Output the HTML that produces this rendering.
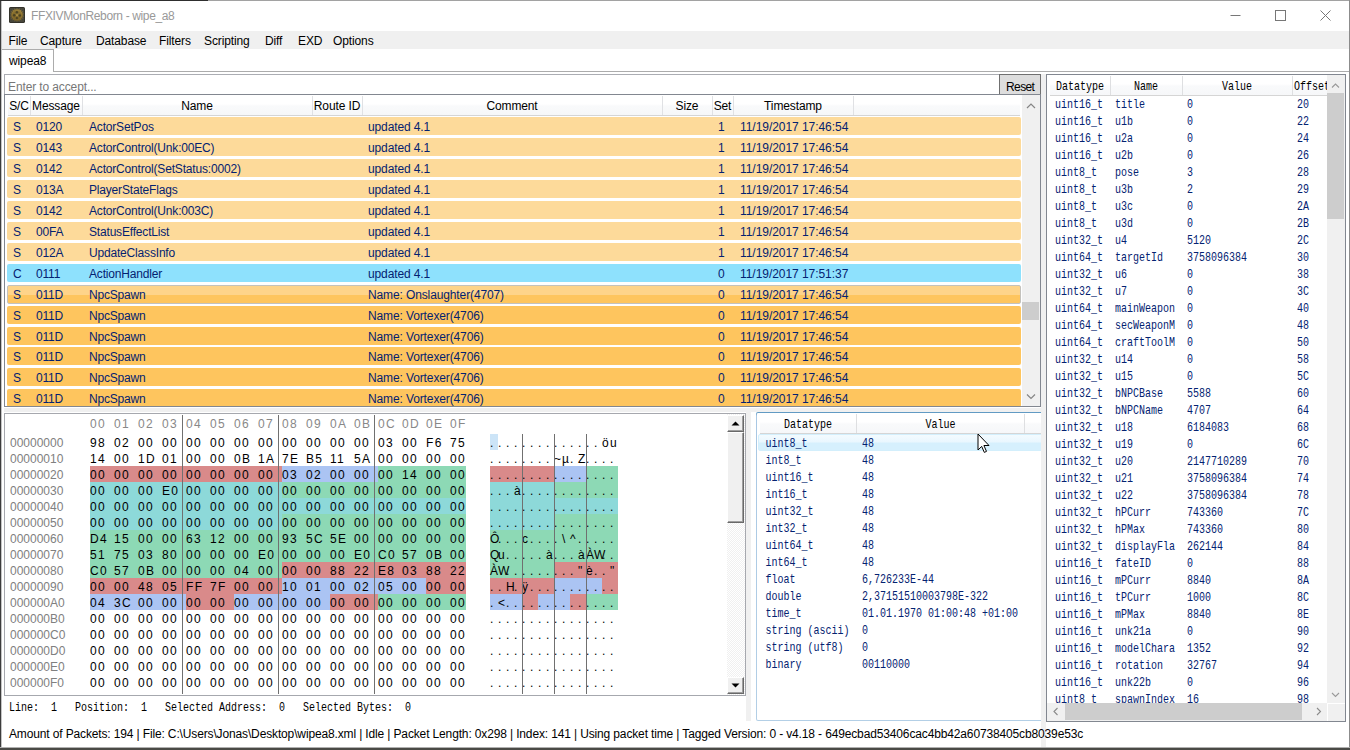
<!DOCTYPE html>
<html lang="en"><head><meta charset="utf-8"><title>FFXIVMonReborn - wipe_a8</title>
<style>
*{box-sizing:border-box;margin:0;padding:0}
html,body{width:1350px;height:750px;overflow:hidden;background:#fff}
body{position:relative;font-family:"Liberation Sans",sans-serif;font-size:12px;color:#000;letter-spacing:-0.12px}
.abs{position:absolute}
.t{position:absolute;white-space:nowrap;line-height:16px;height:16px}
.mono{font-family:"Liberation Mono",monospace;letter-spacing:0}
/* window frame */
#frameL{left:0;top:0;width:2px;height:750px;background:linear-gradient(90deg,#3c3c3c 0,#3c3c3c 1px,#c4c4c4 1px,#c4c4c4 100%)}
#frameT{left:0;top:0;width:1350px;height:1px;background:linear-gradient(90deg,#2e2e2e 0,#2e2e2e 208px,#a2a2a2 208px,#a2a2a2 100%)}
#frameR{left:1349px;top:0;width:1px;height:750px;background:#8c8c8c}
#frameB{left:0;top:747px;width:1350px;height:3px;background:linear-gradient(#b0b0b0 0,#b0b0b0 1px,#4a4a46 1px,#4a4a46 100%)}
#menubar{left:1px;top:31px;width:1348px;height:18px;background:#f0f0f0}
#tab{left:1px;top:49px;width:53px;height:23px;border:1px solid #acacac;border-bottom:none;background:#fff}
#tabline{left:53px;top:71px;width:1296px;height:1px;background:#acacac}
/* main list */
#filter{left:4px;top:74px;width:996px;height:21px;border:1px solid #abadb3;border-bottom:none;background:#fff}
#reset{left:999px;top:74px;width:42px;height:21px;border:1px solid #707070;background:#ddd}
#list{left:4px;top:94px;width:1037px;height:313px;border:1px solid #828790;background:#fff;overflow:hidden}
.hdr{position:absolute;top:0;height:21px;background:linear-gradient(#fff 0,#fff 45%,#f9fafb 55%,#f6f7f9 100%);border-bottom:1px solid #d5d5d5}
.hc{position:absolute;top:1px;height:19px;border-right:1px solid #e0e1e4;text-align:center;line-height:20px;white-space:nowrap}
.row{position:absolute;left:2px;width:1014px;height:18px;border-radius:2px;color:#042271;white-space:nowrap;letter-spacing:-0.18px}
.row span{position:absolute;top:1px;line-height:18px}
.lo{background:#fdda9a}
.or{background:#fec55e}
.bl{background:#8ee1fd}
.vsb{position:absolute;background:#f0f0f0}
.thumb{position:absolute;background:#cdcdcd}
/* hex */
#hex{left:4px;top:413px;width:742px;height:283px;border:1px solid #a6a8ae;background:#fff;overflow:hidden}
.hx{position:absolute;height:16px;line-height:16px;white-space:nowrap;font-size:12px;letter-spacing:1.33px}
.hb{position:absolute;height:16px}
.sep{position:absolute;width:1px;background:#707070}

.hxb i{display:inline-block;width:24px;font-style:normal}
.asc{letter-spacing:0}
.asc i{display:inline-block;width:8px;font-style:normal;text-align:left;overflow:visible}
.cbtn{width:17px;background:#f0f0f0;border:1px solid;border-color:#fff #696969 #696969 #fff;box-shadow:inset -1px -1px 0 #a0a0a0, inset 1px 1px 0 #f0f0f0}
.hov{height:19px;background:linear-gradient(#fed48a 0,#fed48a 9px,#fec55e 9px,#fec55e 100%);border:1px solid #c4c2bd}
.hov span{top:0 !important;margin-left:-1px}
.dhov{height:16px;margin-top:-1px;margin-left:-1px;padding-left:1px;background:linear-gradient(#f3fbff 0,#eaf7fe 45%,#d6f0fd 55%,#d6f0fd 100%);border:1px solid #d3effc;border-radius:2px}
.dhov .mc{margin-top:0;margin-left:0}
/* datatype list */
.mrow{position:absolute;height:17px;white-space:nowrap;color:#042271}
.mc{position:absolute;top:0;height:17px;line-height:17px;font-family:"Liberation Mono",monospace;font-size:10px;letter-spacing:0;transform:scaleY(1.32);transform-origin:0 50%;white-space:nowrap}
.mh{position:absolute;top:1px;height:19px;line-height:22px;font-family:"Liberation Mono",monospace;font-size:10px;letter-spacing:0;text-align:center;border-right:1px solid #dedfe1;color:#000;white-space:nowrap}
.mh b{display:inline-block;font-weight:normal;transform:scaleY(1.32)}
</style></head>
<body>
<div class="abs" id="menubar"></div>
<svg class="abs" style="left:9px;top:7px" width="16" height="16" viewBox="0 0 16 16">
<defs><radialGradient id="gg" cx="0.55" cy="0.3" r="0.75"><stop offset="0" stop-color="#ab9144"/><stop offset="0.55" stop-color="#8c722e"/><stop offset="1" stop-color="#705b25"/></radialGradient></defs>
<rect x="0" y="0" width="16" height="16" rx="1.6" fill="#2c2b24"/>
<rect x="0.7" y="0.7" width="14.6" height="14.6" rx="1" fill="#47463c"/>
<polygon points="8.00,0.70 8.90,2.88 10.50,1.14 10.60,3.50 12.69,2.41 11.98,4.66 14.32,4.35 12.89,6.22 15.19,6.73 13.20,8.00 15.19,9.27 12.89,9.78 14.32,11.65 11.98,11.34 12.69,13.59 10.60,12.50 10.50,14.86 8.90,13.12 8.00,15.30 7.10,13.12 5.50,14.86 5.40,12.50 3.31,13.59 4.02,11.34 1.68,11.65 3.11,9.78 0.81,9.27 2.80,8.00 0.81,6.73 3.11,6.22 1.68,4.35 4.02,4.66 3.31,2.41 5.40,3.50 5.50,1.14 7.10,2.88" fill="url(#gg)"/>
<circle cx="8" cy="8" r="4.4" fill="#6f5a24" opacity="0.5"/>
<circle cx="7.9" cy="5.3" r="1.25" fill="#3d3820" opacity="0.8"/><circle cx="5.2" cy="8.3" r="1.25" fill="#3d3820" opacity="0.8"/><circle cx="10.8" cy="8.5" r="1.25" fill="#3d3820" opacity="0.8"/><circle cx="7.9" cy="11.1" r="1.15" fill="#3d3820" opacity="0.8"/>
<circle cx="8" cy="8.1" r="0.9" fill="#b59b4e"/>
</svg>
<div class="t" style="left:31px;top:8px;color:#999;letter-spacing:-0.36px">FFXIVMonReborn - wipe_a8</div>
<svg class="abs" style="left:1220px;top:1px" width="128" height="30" viewBox="0 0 128 30">
<path d="M10.5 14.5h10" stroke="#777" stroke-width="1" fill="none"/>
<rect x="55.5" y="9.5" width="10" height="10" stroke="#777" stroke-width="1" fill="none"/>
<path d="M100.5 9.5l10 10M110.5 9.5l-10 10" stroke="#777" stroke-width="1" fill="none"/>
</svg>
<div class="t" style="left:8.5px;top:33px">File</div><div class="t" style="left:40px;top:33px">Capture</div><div class="t" style="left:96px;top:33px">Database</div><div class="t" style="left:159px;top:33px">Filters</div><div class="t" style="left:204px;top:33px">Scripting</div><div class="t" style="left:265px;top:33px">Diff</div><div class="t" style="left:298px;top:33px">EXD</div><div class="t" style="left:333px;top:33px">Options</div>
<div class="abs" id="tab"></div><div class="abs" id="tabline"></div>
<div class="t" style="left:9px;top:53px">wipea8</div>
<div class="abs" id="filter"></div><div class="t" style="left:8px;top:79px;color:#777">Enter to accept...</div>
<div class="abs" id="reset"></div><div class="t" style="left:1006px;top:79px;letter-spacing:-0.6px">Reset</div>
<div class="abs" id="list">
<div class="hdr" style="left:3px;width:1012px"></div>
<div class="hc" style="left:3px;width:23px">S/C</div><div class="hc" style="left:25px;width:53px">Message</div><div class="hc" style="left:77px;width:231px">Name</div><div class="hc" style="left:307px;width:51px">Route ID</div><div class="hc" style="left:357px;width:301px">Comment</div><div class="hc" style="left:657px;width:51px">Size</div><div class="hc" style="left:707px;width:22px">Set</div><div class="hc" style="left:728px;width:121px">Timestamp</div>
<div class="row lo" style="top:22px"><span style="left:6px">S</span><span style="left:29px">0120</span><span style="left:82px">ActorSetPos</span><span style="left:361px;letter-spacing:-0.12px">updated 4.1</span><span style="left:711px">1</span><span style="left:733px;letter-spacing:-0.05px">11/19/2017 17:46:54</span></div>
<div class="row lo" style="top:43px"><span style="left:6px">S</span><span style="left:29px">0143</span><span style="left:82px">ActorControl(Unk:00EC)</span><span style="left:361px;letter-spacing:-0.12px">updated 4.1</span><span style="left:711px">1</span><span style="left:733px;letter-spacing:-0.05px">11/19/2017 17:46:54</span></div>
<div class="row lo" style="top:64px"><span style="left:6px">S</span><span style="left:29px">0142</span><span style="left:82px">ActorControl(SetStatus:0002)</span><span style="left:361px;letter-spacing:-0.12px">updated 4.1</span><span style="left:711px">1</span><span style="left:733px;letter-spacing:-0.05px">11/19/2017 17:46:54</span></div>
<div class="row lo" style="top:85px"><span style="left:6px">S</span><span style="left:29px">013A</span><span style="left:82px">PlayerStateFlags</span><span style="left:361px;letter-spacing:-0.12px">updated 4.1</span><span style="left:711px">1</span><span style="left:733px;letter-spacing:-0.05px">11/19/2017 17:46:54</span></div>
<div class="row lo" style="top:106px"><span style="left:6px">S</span><span style="left:29px">0142</span><span style="left:82px">ActorControl(Unk:003C)</span><span style="left:361px;letter-spacing:-0.12px">updated 4.1</span><span style="left:711px">1</span><span style="left:733px;letter-spacing:-0.05px">11/19/2017 17:46:54</span></div>
<div class="row lo" style="top:127px"><span style="left:6px">S</span><span style="left:29px">00FA</span><span style="left:82px">StatusEffectList</span><span style="left:361px;letter-spacing:-0.12px">updated 4.1</span><span style="left:711px">1</span><span style="left:733px;letter-spacing:-0.05px">11/19/2017 17:46:54</span></div>
<div class="row lo" style="top:148px"><span style="left:6px">S</span><span style="left:29px">012A</span><span style="left:82px">UpdateClassInfo</span><span style="left:361px;letter-spacing:-0.12px">updated 4.1</span><span style="left:711px">1</span><span style="left:733px;letter-spacing:-0.05px">11/19/2017 17:46:54</span></div>
<div class="row bl" style="top:169px"><span style="left:6px">C</span><span style="left:29px">0111</span><span style="left:82px">ActionHandler</span><span style="left:361px;letter-spacing:-0.12px">updated 4.1</span><span style="left:711px">0</span><span style="left:733px;letter-spacing:-0.05px">11/19/2017 17:51:37</span></div>
<div class="row or hov" style="top:190px"><span style="left:6px">S</span><span style="left:29px">011D</span><span style="left:82px">NpcSpawn</span><span style="left:361px;letter-spacing:-0.12px">Name: Onslaughter(4707)</span><span style="left:711px">0</span><span style="left:733px;letter-spacing:-0.05px">11/19/2017 17:46:54</span></div>
<div class="row or" style="top:211px"><span style="left:6px">S</span><span style="left:29px">011D</span><span style="left:82px">NpcSpawn</span><span style="left:361px;letter-spacing:-0.12px">Name: Vortexer(4706)</span><span style="left:711px">0</span><span style="left:733px;letter-spacing:-0.05px">11/19/2017 17:46:54</span></div>
<div class="row or" style="top:232px"><span style="left:6px">S</span><span style="left:29px">011D</span><span style="left:82px">NpcSpawn</span><span style="left:361px;letter-spacing:-0.12px">Name: Vortexer(4706)</span><span style="left:711px">0</span><span style="left:733px;letter-spacing:-0.05px">11/19/2017 17:46:54</span></div>
<div class="row or" style="top:252px"><span style="left:6px">S</span><span style="left:29px">011D</span><span style="left:82px">NpcSpawn</span><span style="left:361px;letter-spacing:-0.12px">Name: Vortexer(4706)</span><span style="left:711px">0</span><span style="left:733px;letter-spacing:-0.05px">11/19/2017 17:46:54</span></div>
<div class="row or" style="top:273px"><span style="left:6px">S</span><span style="left:29px">011D</span><span style="left:82px">NpcSpawn</span><span style="left:361px;letter-spacing:-0.12px">Name: Vortexer(4706)</span><span style="left:711px">0</span><span style="left:733px;letter-spacing:-0.05px">11/19/2017 17:46:54</span></div>
<div class="row or" style="top:294px"><span style="left:6px">S</span><span style="left:29px">011D</span><span style="left:82px">NpcSpawn</span><span style="left:361px;letter-spacing:-0.12px">Name: Vortexer(4706)</span><span style="left:711px">0</span><span style="left:733px;letter-spacing:-0.05px">11/19/2017 17:46:54</span></div>
<div class="vsb" style="left:1017px;top:0;width:18px;height:311px"></div><div class="thumb" style="left:1017px;top:207px;width:17px;height:18px"></div><svg class="abs" style="left:1017px;top:0" width="18" height="310" viewBox="0 0 18 310"><path d="M5 13l4-4 4 4" stroke="#858585" stroke-width="1.2" fill="none"/><path d="M5 299.5l4 4 4-4" stroke="#858585" stroke-width="1.2" fill="none"/></svg></div>
<div class="abs" style="left:4px;top:408px;width:1037px;height:4px;background:#f0f0f0"></div>
<div class="abs" style="left:1041px;top:74px;width:5px;height:673px;background:#f0f0f0"></div>
<div class="abs" style="left:746px;top:412px;width:5px;height:309px;background:#f0f0f0"></div>
<div class="abs" id="hex">
<div class="hx hxb" style="left:85px;top:2px;color:#888"><i>00</i><i>01</i><i>02</i><i>03</i><i>04</i><i>05</i><i>06</i><i>07</i><i>08</i><i>09</i><i>0A</i><i>0B</i><i>0C</i><i>0D</i><i>0E</i><i>0F</i></div>
<div class="hb" style="left:485px;top:20px;width:8px;background:#cce4f7"></div><div class="hx" style="left:5px;top:21px;color:#808080;letter-spacing:0">00000000</div><div class="hx hxb" style="left:85px;top:21px"><i>98</i><i>02</i><i>00</i><i>00</i><i>00</i><i>00</i><i>00</i><i>00</i><i>00</i><i>00</i><i>00</i><i>00</i><i>03</i><i>00</i><i>F6</i><i>75</i></div><div class="hx asc" style="left:485px;top:21px"><i>.</i><i>.</i><i>.</i><i>.</i><i>.</i><i>.</i><i>.</i><i>.</i><i>.</i><i>.</i><i>.</i><i>.</i><i>.</i><i>.</i><i>ö</i><i>u</i></div>
<div class="hx" style="left:5px;top:37px;color:#808080;letter-spacing:0">00000010</div><div class="hx hxb" style="left:85px;top:37px"><i>14</i><i>00</i><i>1D</i><i>01</i><i>00</i><i>00</i><i>0B</i><i>1A</i><i>7E</i><i>B5</i><i>11</i><i>5A</i><i>00</i><i>00</i><i>00</i><i>00</i></div><div class="hx asc" style="left:485px;top:37px"><i>.</i><i>.</i><i>.</i><i>.</i><i>.</i><i>.</i><i>.</i><i>.</i><i>~</i><i>µ</i><i>.</i><i>Z</i><i>.</i><i>.</i><i>.</i><i>.</i></div>
<div class="hb" style="left:85px;top:52px;width:192px;background:#d98a8a"></div><div class="hb" style="left:485px;top:52px;width:64px;background:#d98a8a"></div><div class="hb" style="left:277px;top:52px;width:96px;background:#abc4f3"></div><div class="hb" style="left:549px;top:52px;width:32px;background:#abc4f3"></div><div class="hb" style="left:373px;top:52px;width:88px;background:#8dd9b5"></div><div class="hb" style="left:581px;top:52px;width:32px;background:#8dd9b5"></div><div class="hx" style="left:5px;top:53px;color:#808080;letter-spacing:0">00000020</div><div class="hx hxb" style="left:85px;top:53px"><i>00</i><i>00</i><i>00</i><i>00</i><i>00</i><i>00</i><i>00</i><i>00</i><i>03</i><i>02</i><i>00</i><i>00</i><i>00</i><i>14</i><i>00</i><i>00</i></div><div class="hx asc" style="left:485px;top:53px"><i>.</i><i>.</i><i>.</i><i>.</i><i>.</i><i>.</i><i>.</i><i>.</i><i>.</i><i>.</i><i>.</i><i>.</i><i>.</i><i>.</i><i>.</i><i>.</i></div>
<div class="hb" style="left:85px;top:68px;width:192px;background:#8dd9d9"></div><div class="hb" style="left:485px;top:68px;width:64px;background:#8dd9d9"></div><div class="hb" style="left:277px;top:68px;width:184px;background:#8dd9b5"></div><div class="hb" style="left:549px;top:68px;width:64px;background:#8dd9b5"></div><div class="hx" style="left:5px;top:69px;color:#808080;letter-spacing:0">00000030</div><div class="hx hxb" style="left:85px;top:69px"><i>00</i><i>00</i><i>00</i><i>E0</i><i>00</i><i>00</i><i>00</i><i>00</i><i>00</i><i>00</i><i>00</i><i>00</i><i>00</i><i>00</i><i>00</i><i>00</i></div><div class="hx asc" style="left:485px;top:69px"><i>.</i><i>.</i><i>.</i><i>à</i><i>.</i><i>.</i><i>.</i><i>.</i><i>.</i><i>.</i><i>.</i><i>.</i><i>.</i><i>.</i><i>.</i><i>.</i></div>
<div class="hb" style="left:85px;top:84px;width:376px;background:#8dd9d9"></div><div class="hb" style="left:485px;top:84px;width:128px;background:#8dd9d9"></div><div class="hx" style="left:5px;top:85px;color:#808080;letter-spacing:0">00000040</div><div class="hx hxb" style="left:85px;top:85px"><i>00</i><i>00</i><i>00</i><i>00</i><i>00</i><i>00</i><i>00</i><i>00</i><i>00</i><i>00</i><i>00</i><i>00</i><i>00</i><i>00</i><i>00</i><i>00</i></div><div class="hx asc" style="left:485px;top:85px"><i>.</i><i>.</i><i>.</i><i>.</i><i>.</i><i>.</i><i>.</i><i>.</i><i>.</i><i>.</i><i>.</i><i>.</i><i>.</i><i>.</i><i>.</i><i>.</i></div>
<div class="hb" style="left:85px;top:100px;width:192px;background:#8dd9d9"></div><div class="hb" style="left:485px;top:100px;width:64px;background:#8dd9d9"></div><div class="hb" style="left:277px;top:100px;width:184px;background:#8dd9b5"></div><div class="hb" style="left:549px;top:100px;width:64px;background:#8dd9b5"></div><div class="hx" style="left:5px;top:101px;color:#808080;letter-spacing:0">00000050</div><div class="hx hxb" style="left:85px;top:101px"><i>00</i><i>00</i><i>00</i><i>00</i><i>00</i><i>00</i><i>00</i><i>00</i><i>00</i><i>00</i><i>00</i><i>00</i><i>00</i><i>00</i><i>00</i><i>00</i></div><div class="hx asc" style="left:485px;top:101px"><i>.</i><i>.</i><i>.</i><i>.</i><i>.</i><i>.</i><i>.</i><i>.</i><i>.</i><i>.</i><i>.</i><i>.</i><i>.</i><i>.</i><i>.</i><i>.</i></div>
<div class="hb" style="left:85px;top:116px;width:376px;background:#8dd9b5"></div><div class="hb" style="left:485px;top:116px;width:128px;background:#8dd9b5"></div><div class="hx" style="left:5px;top:117px;color:#808080;letter-spacing:0">00000060</div><div class="hx hxb" style="left:85px;top:117px"><i>D4</i><i>15</i><i>00</i><i>00</i><i>63</i><i>12</i><i>00</i><i>00</i><i>93</i><i>5C</i><i>5E</i><i>00</i><i>00</i><i>00</i><i>00</i><i>00</i></div><div class="hx asc" style="left:485px;top:117px"><i>Ô</i><i>.</i><i>.</i><i>.</i><i>c</i><i>.</i><i>.</i><i>.</i><i>.</i><i>\</i><i>^</i><i>.</i><i>.</i><i>.</i><i>.</i><i>.</i></div>
<div class="hb" style="left:85px;top:132px;width:376px;background:#8dd9b5"></div><div class="hb" style="left:485px;top:132px;width:128px;background:#8dd9b5"></div><div class="hx" style="left:5px;top:133px;color:#808080;letter-spacing:0">00000070</div><div class="hx hxb" style="left:85px;top:133px"><i>51</i><i>75</i><i>03</i><i>80</i><i>00</i><i>00</i><i>00</i><i>E0</i><i>00</i><i>00</i><i>00</i><i>E0</i><i>C0</i><i>57</i><i>0B</i><i>00</i></div><div class="hx asc" style="left:485px;top:133px"><i>Q</i><i>u</i><i>.</i><i>.</i><i>.</i><i>.</i><i>.</i><i>à</i><i>.</i><i>.</i><i>.</i><i>à</i><i>À</i><i>W</i><i>.</i><i>.</i></div>
<div class="hb" style="left:85px;top:148px;width:192px;background:#8dd9b5"></div><div class="hb" style="left:485px;top:148px;width:64px;background:#8dd9b5"></div><div class="hb" style="left:277px;top:148px;width:184px;background:#d98a8a"></div><div class="hb" style="left:549px;top:148px;width:64px;background:#d98a8a"></div><div class="hx" style="left:5px;top:149px;color:#808080;letter-spacing:0">00000080</div><div class="hx hxb" style="left:85px;top:149px"><i>C0</i><i>57</i><i>0B</i><i>00</i><i>00</i><i>00</i><i>04</i><i>00</i><i>00</i><i>00</i><i>88</i><i>22</i><i>E8</i><i>03</i><i>88</i><i>22</i></div><div class="hx asc" style="left:485px;top:149px"><i>À</i><i>W</i><i>.</i><i>.</i><i>.</i><i>.</i><i>.</i><i>.</i><i>.</i><i>.</i><i>.</i><i>&quot;</i><i>è</i><i>.</i><i>.</i><i>&quot;</i></div>
<div class="hb" style="left:85px;top:164px;width:192px;background:#d98a8a"></div><div class="hb" style="left:485px;top:164px;width:64px;background:#d98a8a"></div><div class="hb" style="left:277px;top:164px;width:144px;background:#abc4f3"></div><div class="hb" style="left:549px;top:164px;width:48px;background:#abc4f3"></div><div class="hb" style="left:421px;top:164px;width:40px;background:#d98a8a"></div><div class="hb" style="left:597px;top:164px;width:16px;background:#d98a8a"></div><div class="hx" style="left:5px;top:165px;color:#808080;letter-spacing:0">00000090</div><div class="hx hxb" style="left:85px;top:165px"><i>00</i><i>00</i><i>48</i><i>05</i><i>FF</i><i>7F</i><i>00</i><i>00</i><i>10</i><i>01</i><i>00</i><i>02</i><i>05</i><i>00</i><i>00</i><i>00</i></div><div class="hx asc" style="left:485px;top:165px"><i>.</i><i>.</i><i>H</i><i>.</i><i>ÿ</i><i>.</i><i>.</i><i>.</i><i>.</i><i>.</i><i>.</i><i>.</i><i>.</i><i>.</i><i>.</i><i>.</i></div>
<div class="hb" style="left:85px;top:180px;width:96px;background:#abc4f3"></div><div class="hb" style="left:485px;top:180px;width:32px;background:#abc4f3"></div><div class="hb" style="left:181px;top:180px;width:48px;background:#d98a8a"></div><div class="hb" style="left:517px;top:180px;width:16px;background:#d98a8a"></div><div class="hb" style="left:229px;top:180px;width:96px;background:#abc4f3"></div><div class="hb" style="left:533px;top:180px;width:32px;background:#abc4f3"></div><div class="hb" style="left:325px;top:180px;width:48px;background:#d98a8a"></div><div class="hb" style="left:565px;top:180px;width:16px;background:#d98a8a"></div><div class="hb" style="left:373px;top:180px;width:88px;background:#8dd9b5"></div><div class="hb" style="left:581px;top:180px;width:32px;background:#8dd9b5"></div><div class="hx" style="left:5px;top:181px;color:#808080;letter-spacing:0">000000A0</div><div class="hx hxb" style="left:85px;top:181px"><i>04</i><i>3C</i><i>00</i><i>00</i><i>00</i><i>00</i><i>00</i><i>00</i><i>00</i><i>00</i><i>00</i><i>00</i><i>00</i><i>00</i><i>00</i><i>00</i></div><div class="hx asc" style="left:485px;top:181px"><i>.</i><i>&lt;</i><i>.</i><i>.</i><i>.</i><i>.</i><i>.</i><i>.</i><i>.</i><i>.</i><i>.</i><i>.</i><i>.</i><i>.</i><i>.</i><i>.</i></div>
<div class="hx" style="left:5px;top:197px;color:#808080;letter-spacing:0">000000B0</div><div class="hx hxb" style="left:85px;top:197px"><i>00</i><i>00</i><i>00</i><i>00</i><i>00</i><i>00</i><i>00</i><i>00</i><i>00</i><i>00</i><i>00</i><i>00</i><i>00</i><i>00</i><i>00</i><i>00</i></div><div class="hx asc" style="left:485px;top:197px"><i>.</i><i>.</i><i>.</i><i>.</i><i>.</i><i>.</i><i>.</i><i>.</i><i>.</i><i>.</i><i>.</i><i>.</i><i>.</i><i>.</i><i>.</i><i>.</i></div>
<div class="hx" style="left:5px;top:213px;color:#808080;letter-spacing:0">000000C0</div><div class="hx hxb" style="left:85px;top:213px"><i>00</i><i>00</i><i>00</i><i>00</i><i>00</i><i>00</i><i>00</i><i>00</i><i>00</i><i>00</i><i>00</i><i>00</i><i>00</i><i>00</i><i>00</i><i>00</i></div><div class="hx asc" style="left:485px;top:213px"><i>.</i><i>.</i><i>.</i><i>.</i><i>.</i><i>.</i><i>.</i><i>.</i><i>.</i><i>.</i><i>.</i><i>.</i><i>.</i><i>.</i><i>.</i><i>.</i></div>
<div class="hx" style="left:5px;top:229px;color:#808080;letter-spacing:0">000000D0</div><div class="hx hxb" style="left:85px;top:229px"><i>00</i><i>00</i><i>00</i><i>00</i><i>00</i><i>00</i><i>00</i><i>00</i><i>00</i><i>00</i><i>00</i><i>00</i><i>00</i><i>00</i><i>00</i><i>00</i></div><div class="hx asc" style="left:485px;top:229px"><i>.</i><i>.</i><i>.</i><i>.</i><i>.</i><i>.</i><i>.</i><i>.</i><i>.</i><i>.</i><i>.</i><i>.</i><i>.</i><i>.</i><i>.</i><i>.</i></div>
<div class="hx" style="left:5px;top:245px;color:#808080;letter-spacing:0">000000E0</div><div class="hx hxb" style="left:85px;top:245px"><i>00</i><i>00</i><i>00</i><i>00</i><i>00</i><i>00</i><i>00</i><i>00</i><i>00</i><i>00</i><i>00</i><i>00</i><i>00</i><i>00</i><i>00</i><i>00</i></div><div class="hx asc" style="left:485px;top:245px"><i>.</i><i>.</i><i>.</i><i>.</i><i>.</i><i>.</i><i>.</i><i>.</i><i>.</i><i>.</i><i>.</i><i>.</i><i>.</i><i>.</i><i>.</i><i>.</i></div>
<div class="hx" style="left:5px;top:261px;color:#808080;letter-spacing:0">000000F0</div><div class="hx hxb" style="left:85px;top:261px"><i>00</i><i>00</i><i>00</i><i>00</i><i>00</i><i>00</i><i>00</i><i>00</i><i>00</i><i>00</i><i>00</i><i>00</i><i>00</i><i>00</i><i>00</i><i>00</i></div><div class="hx asc" style="left:485px;top:261px"><i>.</i><i>.</i><i>.</i><i>.</i><i>.</i><i>.</i><i>.</i><i>.</i><i>.</i><i>.</i><i>.</i><i>.</i><i>.</i><i>.</i><i>.</i><i>.</i></div>
<div class="sep" style="left:177px;top:1px;height:279px"></div><div class="sep" style="left:273px;top:1px;height:279px"></div><div class="sep" style="left:369px;top:1px;height:279px"></div><div class="sep" style="left:517px;top:20px;height:260px"></div><div class="sep" style="left:549px;top:20px;height:260px"></div><div class="sep" style="left:581px;top:20px;height:260px"></div><div class="abs" style="left:722px;top:0px;width:18px;height:281px;background:repeating-conic-gradient(#fff 0 25%,#f0f0f0 0 50%) 0 0/2px 2px"></div>
<div class="abs cbtn" style="left:722px;top:1px;height:17px"></div>
<div class="abs cbtn" style="left:722px;top:18px;height:91px"></div>
<div class="abs cbtn" style="left:722px;top:263px;height:17px"></div>
<svg class="abs" style="left:722px;top:1px" width="17" height="17"><path d="M4.5 10.5h8l-4-4z" fill="#000"/></svg>
<svg class="abs" style="left:722px;top:263px" width="17" height="17"><path d="M4.5 6.5h8l-4 4z" fill="#000"/></svg>
</div>
<div class="t mono" style="left:9px;top:700px;font-size:10px;transform:scaleY(1.32);white-space:pre">Line:  1   Position:  1   Selected Address:  0   Selected Bytes:  0</div>
<div class="abs" style="left:756px;top:412px;width:285px;height:309px;overflow:hidden"><div class="abs" style="left:0;top:0;width:300px;height:309px;background:linear-gradient(#5794bf 0,#a9c8e4 4px,#b3cfe6 100%);border-radius:2px"></div></div>
<div class="abs" style="left:757px;top:413px;width:284px;height:307px;background:#fff;overflow:hidden;border-radius:1px 0 0 1px">
<div class="hdr" style="left:3px;width:283px"></div><div class="mh" style="left:3px;width:97px"><b>Datatype</b></div><div class="mh" style="left:100px;width:168px"><b>Value</b></div>
<div class="mrow dhov" style="left:2px;top:22px;width:290px"><span class="mc" style="left:6.5px">uint8_t</span><span class="mc" style="left:103px">48</span></div>
<div class="mrow" style="left:2px;top:39px;width:290px"><span class="mc" style="left:6.5px">int8_t</span><span class="mc" style="left:103px">48</span></div>
<div class="mrow" style="left:2px;top:56px;width:290px"><span class="mc" style="left:6.5px">uint16_t</span><span class="mc" style="left:103px">48</span></div>
<div class="mrow" style="left:2px;top:73px;width:290px"><span class="mc" style="left:6.5px">int16_t</span><span class="mc" style="left:103px">48</span></div>
<div class="mrow" style="left:2px;top:90px;width:290px"><span class="mc" style="left:6.5px">uint32_t</span><span class="mc" style="left:103px">48</span></div>
<div class="mrow" style="left:2px;top:107px;width:290px"><span class="mc" style="left:6.5px">int32_t</span><span class="mc" style="left:103px">48</span></div>
<div class="mrow" style="left:2px;top:124px;width:290px"><span class="mc" style="left:6.5px">uint64_t</span><span class="mc" style="left:103px">48</span></div>
<div class="mrow" style="left:2px;top:141px;width:290px"><span class="mc" style="left:6.5px">int64_t</span><span class="mc" style="left:103px">48</span></div>
<div class="mrow" style="left:2px;top:158px;width:290px"><span class="mc" style="left:6.5px">float</span><span class="mc" style="left:103px">6,726233E-44</span></div>
<div class="mrow" style="left:2px;top:175px;width:290px"><span class="mc" style="left:6.5px">double</span><span class="mc" style="left:103px">2,37151510003798E-322</span></div>
<div class="mrow" style="left:2px;top:192px;width:290px"><span class="mc" style="left:6.5px">time_t</span><span class="mc" style="left:103px">01.01.1970 01:00:48 +01:00</span></div>
<div class="mrow" style="left:2px;top:209px;width:290px"><span class="mc" style="left:6.5px">string (ascii)</span><span class="mc" style="left:103px">0</span></div>
<div class="mrow" style="left:2px;top:226px;width:290px"><span class="mc" style="left:6.5px">string (utf8)</span><span class="mc" style="left:103px">0</span></div>
<div class="mrow" style="left:2px;top:243px;width:290px"><span class="mc" style="left:6.5px">binary</span><span class="mc" style="left:103px">00110000</span></div>
</div>
<svg class="abs" style="left:976.5px;top:433px" width="14" height="21" viewBox="0 0 14 21"><path d="M1 1v16l3.7-3.6 2.6 6 2.2-1-2.6-5.9h5.1z" fill="#fff" stroke="#000" stroke-width="1"/></svg>
<div class="abs" style="left:1046px;top:74px;width:300px;height:648px;border:1px solid #828790;background:#fff;overflow:hidden">
<div class="hdr" style="left:3px;width:277px"></div><div class="mh" style="left:3px;width:61px"><b>Datatype</b></div><div class="mh" style="left:63px;width:73px"><b>Name</b></div><div class="mh" style="left:135px;width:111px"><b>Value</b></div><div class="mh" style="left:245px;width:41px"><b>Offset</b></div>
<div class="mrow" style="left:2px;top:21px;width:277px"><span class="mc" style="left:6px">uint16_t</span><span class="mc" style="left:66px">title</span><span class="mc" style="left:138px">0</span><span class="mc" style="left:248px">20</span></div>
<div class="mrow" style="left:2px;top:38px;width:277px"><span class="mc" style="left:6px">uint16_t</span><span class="mc" style="left:66px">u1b</span><span class="mc" style="left:138px">0</span><span class="mc" style="left:248px">22</span></div>
<div class="mrow" style="left:2px;top:55px;width:277px"><span class="mc" style="left:6px">uint16_t</span><span class="mc" style="left:66px">u2a</span><span class="mc" style="left:138px">0</span><span class="mc" style="left:248px">24</span></div>
<div class="mrow" style="left:2px;top:72px;width:277px"><span class="mc" style="left:6px">uint16_t</span><span class="mc" style="left:66px">u2b</span><span class="mc" style="left:138px">0</span><span class="mc" style="left:248px">26</span></div>
<div class="mrow" style="left:2px;top:89px;width:277px"><span class="mc" style="left:6px">uint8_t</span><span class="mc" style="left:66px">pose</span><span class="mc" style="left:138px">3</span><span class="mc" style="left:248px">28</span></div>
<div class="mrow" style="left:2px;top:106px;width:277px"><span class="mc" style="left:6px">uint8_t</span><span class="mc" style="left:66px">u3b</span><span class="mc" style="left:138px">2</span><span class="mc" style="left:248px">29</span></div>
<div class="mrow" style="left:2px;top:123px;width:277px"><span class="mc" style="left:6px">uint8_t</span><span class="mc" style="left:66px">u3c</span><span class="mc" style="left:138px">0</span><span class="mc" style="left:248px">2A</span></div>
<div class="mrow" style="left:2px;top:140px;width:277px"><span class="mc" style="left:6px">uint8_t</span><span class="mc" style="left:66px">u3d</span><span class="mc" style="left:138px">0</span><span class="mc" style="left:248px">2B</span></div>
<div class="mrow" style="left:2px;top:157px;width:277px"><span class="mc" style="left:6px">uint32_t</span><span class="mc" style="left:66px">u4</span><span class="mc" style="left:138px">5120</span><span class="mc" style="left:248px">2C</span></div>
<div class="mrow" style="left:2px;top:174px;width:277px"><span class="mc" style="left:6px">uint64_t</span><span class="mc" style="left:66px">targetId</span><span class="mc" style="left:138px">3758096384</span><span class="mc" style="left:248px">30</span></div>
<div class="mrow" style="left:2px;top:191px;width:277px"><span class="mc" style="left:6px">uint32_t</span><span class="mc" style="left:66px">u6</span><span class="mc" style="left:138px">0</span><span class="mc" style="left:248px">38</span></div>
<div class="mrow" style="left:2px;top:208px;width:277px"><span class="mc" style="left:6px">uint32_t</span><span class="mc" style="left:66px">u7</span><span class="mc" style="left:138px">0</span><span class="mc" style="left:248px">3C</span></div>
<div class="mrow" style="left:2px;top:225px;width:277px"><span class="mc" style="left:6px">uint64_t</span><span class="mc" style="left:66px">mainWeapon</span><span class="mc" style="left:138px">0</span><span class="mc" style="left:248px">40</span></div>
<div class="mrow" style="left:2px;top:242px;width:277px"><span class="mc" style="left:6px">uint64_t</span><span class="mc" style="left:66px">secWeaponM</span><span class="mc" style="left:138px">0</span><span class="mc" style="left:248px">48</span></div>
<div class="mrow" style="left:2px;top:259px;width:277px"><span class="mc" style="left:6px">uint64_t</span><span class="mc" style="left:66px">craftToolM</span><span class="mc" style="left:138px">0</span><span class="mc" style="left:248px">50</span></div>
<div class="mrow" style="left:2px;top:276px;width:277px"><span class="mc" style="left:6px">uint32_t</span><span class="mc" style="left:66px">u14</span><span class="mc" style="left:138px">0</span><span class="mc" style="left:248px">58</span></div>
<div class="mrow" style="left:2px;top:293px;width:277px"><span class="mc" style="left:6px">uint32_t</span><span class="mc" style="left:66px">u15</span><span class="mc" style="left:138px">0</span><span class="mc" style="left:248px">5C</span></div>
<div class="mrow" style="left:2px;top:310px;width:277px"><span class="mc" style="left:6px">uint32_t</span><span class="mc" style="left:66px">bNPCBase</span><span class="mc" style="left:138px">5588</span><span class="mc" style="left:248px">60</span></div>
<div class="mrow" style="left:2px;top:327px;width:277px"><span class="mc" style="left:6px">uint32_t</span><span class="mc" style="left:66px">bNPCName</span><span class="mc" style="left:138px">4707</span><span class="mc" style="left:248px">64</span></div>
<div class="mrow" style="left:2px;top:344px;width:277px"><span class="mc" style="left:6px">uint32_t</span><span class="mc" style="left:66px">u18</span><span class="mc" style="left:138px">6184083</span><span class="mc" style="left:248px">68</span></div>
<div class="mrow" style="left:2px;top:361px;width:277px"><span class="mc" style="left:6px">uint32_t</span><span class="mc" style="left:66px">u19</span><span class="mc" style="left:138px">0</span><span class="mc" style="left:248px">6C</span></div>
<div class="mrow" style="left:2px;top:378px;width:277px"><span class="mc" style="left:6px">uint32_t</span><span class="mc" style="left:66px">u20</span><span class="mc" style="left:138px">2147710289</span><span class="mc" style="left:248px">70</span></div>
<div class="mrow" style="left:2px;top:395px;width:277px"><span class="mc" style="left:6px">uint32_t</span><span class="mc" style="left:66px">u21</span><span class="mc" style="left:138px">3758096384</span><span class="mc" style="left:248px">74</span></div>
<div class="mrow" style="left:2px;top:412px;width:277px"><span class="mc" style="left:6px">uint32_t</span><span class="mc" style="left:66px">u22</span><span class="mc" style="left:138px">3758096384</span><span class="mc" style="left:248px">78</span></div>
<div class="mrow" style="left:2px;top:429px;width:277px"><span class="mc" style="left:6px">uint32_t</span><span class="mc" style="left:66px">hPCurr</span><span class="mc" style="left:138px">743360</span><span class="mc" style="left:248px">7C</span></div>
<div class="mrow" style="left:2px;top:446px;width:277px"><span class="mc" style="left:6px">uint32_t</span><span class="mc" style="left:66px">hPMax</span><span class="mc" style="left:138px">743360</span><span class="mc" style="left:248px">80</span></div>
<div class="mrow" style="left:2px;top:463px;width:277px"><span class="mc" style="left:6px">uint32_t</span><span class="mc" style="left:66px">displayFla</span><span class="mc" style="left:138px">262144</span><span class="mc" style="left:248px">84</span></div>
<div class="mrow" style="left:2px;top:480px;width:277px"><span class="mc" style="left:6px">uint16_t</span><span class="mc" style="left:66px">fateID</span><span class="mc" style="left:138px">0</span><span class="mc" style="left:248px">88</span></div>
<div class="mrow" style="left:2px;top:497px;width:277px"><span class="mc" style="left:6px">uint16_t</span><span class="mc" style="left:66px">mPCurr</span><span class="mc" style="left:138px">8840</span><span class="mc" style="left:248px">8A</span></div>
<div class="mrow" style="left:2px;top:514px;width:277px"><span class="mc" style="left:6px">uint16_t</span><span class="mc" style="left:66px">tPCurr</span><span class="mc" style="left:138px">1000</span><span class="mc" style="left:248px">8C</span></div>
<div class="mrow" style="left:2px;top:531px;width:277px"><span class="mc" style="left:6px">uint16_t</span><span class="mc" style="left:66px">mPMax</span><span class="mc" style="left:138px">8840</span><span class="mc" style="left:248px">8E</span></div>
<div class="mrow" style="left:2px;top:548px;width:277px"><span class="mc" style="left:6px">uint16_t</span><span class="mc" style="left:66px">unk21a</span><span class="mc" style="left:138px">0</span><span class="mc" style="left:248px">90</span></div>
<div class="mrow" style="left:2px;top:565px;width:277px"><span class="mc" style="left:6px">uint16_t</span><span class="mc" style="left:66px">modelChara</span><span class="mc" style="left:138px">1352</span><span class="mc" style="left:248px">92</span></div>
<div class="mrow" style="left:2px;top:582px;width:277px"><span class="mc" style="left:6px">uint16_t</span><span class="mc" style="left:66px">rotation</span><span class="mc" style="left:138px">32767</span><span class="mc" style="left:248px">94</span></div>
<div class="mrow" style="left:2px;top:599px;width:277px"><span class="mc" style="left:6px">uint16_t</span><span class="mc" style="left:66px">unk22b</span><span class="mc" style="left:138px">0</span><span class="mc" style="left:248px">96</span></div>
<div class="mrow" style="left:2px;top:616px;width:277px"><span class="mc" style="left:6px">uint8_t</span><span class="mc" style="left:66px">spawnIndex</span><span class="mc" style="left:138px">16</span><span class="mc" style="left:248px">98</span></div>
<div class="vsb" style="left:280px;top:0;width:18px;height:628px"></div><div class="thumb" style="left:280px;top:18px;width:17px;height:126px"></div><div class="vsb" style="left:0;top:628px;width:298px;height:18px"></div><div class="thumb" style="left:18px;top:628px;width:237px;height:17px"></div><div class="abs" style="left:280px;top:628px;width:1px;height:18px;background:#fff"></div><div class="abs" style="left:280px;top:628px;width:18px;height:1px;background:#fff"></div><svg class="abs" style="left:280px;top:0" width="18" height="629"><path d="M5 12.5l3.5-3.5 3.5 3.5" stroke="#999" stroke-width="1.1" fill="none"/><path d="M5 618l3.5 3.5 3.5-3.5" stroke="#999" stroke-width="1.1" fill="none"/></svg>
<svg class="abs" style="left:0;top:628px" width="281" height="17"><path d="M10.5 5l-3.5 3.5 3.5 3.5" stroke="#8a8a8a" stroke-width="1.1" fill="none"/><path d="M270 5l3.5 3.5-3.5 3.5" stroke="#8a8a8a" stroke-width="1.1" fill="none"/></svg></div>
<div class="t" style="left:9px;top:726px;letter-spacing:-0.14px">Amount of Packets: 194 | File: C:\Users\Jonas\Desktop\wipea8.xml | Idle | Packet Length: 0x298 | Index: 141 | Using packet time | Tagged Version: 0 - v4.18 - 649ecbad53406cac4bb42a60738405cb8039e53c</div>
<div class="abs" id="frameL"></div><div class="abs" id="frameT"></div><div class="abs" id="frameR"></div><div class="abs" id="frameB"></div>
</body></html>
